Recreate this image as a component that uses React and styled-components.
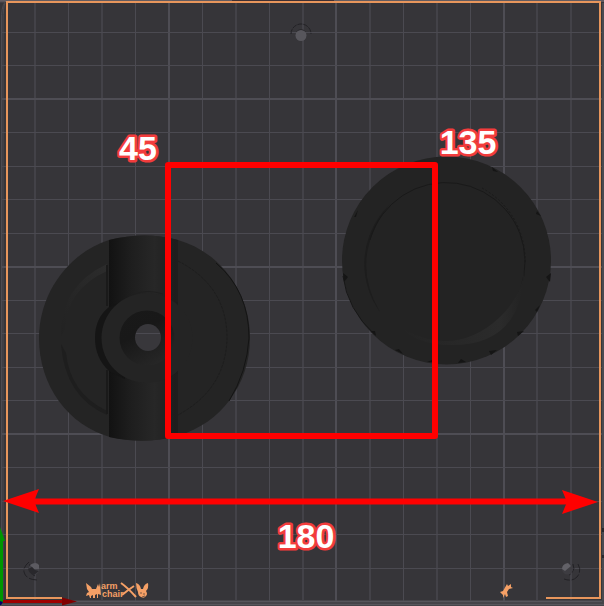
import React from "react";
import styled, { createGlobalStyle } from "styled-components";

const GlobalStyle = createGlobalStyle`
  body {
    margin: 0;
    background: #363539;
  }
`;

const Viewport = styled.main`
  width: 100%;
  overflow: hidden;
`;

const Scene = styled.svg`
  display: block;
  width: 100%;
  height: auto;
`;

const lineColors = { major: "#4e4d54", soft: "#434248", thin: "#4b4a51" };

const GridLine = styled.line`
  stroke: ${(p) => lineColors[p.$weight]};
  stroke-width: ${(p) => (p.$weight === "thin" ? 1 : 2)};
`;

const PlateEdge = styled.path`
  fill: none;
  stroke: #e8965c;
  stroke-width: 2;
`;

const Marker = styled.path`
  fill: none;
  stroke: #ff0000;
  stroke-width: 6;
  stroke-linejoin: round;
`;

const ArrowHead = styled.path`
  fill: #ff0000;
`;

const Dimension = styled.text`
  font-family: "Liberation Sans", Arial, sans-serif;
  font-size: 34px;
  font-weight: 700;
  text-anchor: middle;
  fill: #ffffff;
  stroke: #f23c3c;
  stroke-width: 5px;
  stroke-linejoin: round;
  paint-order: stroke;
`;

const LogoWord = styled.text`
  font-family: "Liberation Sans", Arial, sans-serif;
  font-size: 9px;
  font-weight: 700;
  fill: #f5a066;
  stroke: none;
`;

const columns = [35, 68, 102, 135, 169, 202, 236, 269, 303, 336, 370, 403, 437, 470, 504, 537, 571];
const rows = [32, 65, 99, 132, 166, 199, 233, 267, 300, 333, 367, 400, 434, 467, 501, 534, 568];
const majorColumns = [169, 336, 504];
const softColumns = [35, 102, 236, 303, 370, 437, 537, 571];
const majorRows = [99, 267, 434];

function Grid() {
  return (
    <g>
      {columns.map((x) => {
        const weight = majorColumns.includes(x) ? "major" : softColumns.includes(x) ? "soft" : "thin";
        const at = weight === "thin" ? x + 0.5 : x;
        return <GridLine key={x} $weight={weight} x1={at} x2={at} y1="3" y2="601" />;
      })}
      {rows.map((y) => {
        const weight = majorRows.includes(y) ? "major" : "thin";
        const at = weight === "thin" ? y + 0.5 : y;
        return <GridLine key={y} $weight={weight} x1="2" x2="602" y1={at} y2={at} />;
      })}
    </g>
  );
}

function Screws() {
  return (
    <g>
      <path d="M291 34a10 10 0 0 1 20 0" fill="none" stroke="#222125" strokeDasharray="5 1" />
      <path d="M296 32q5-6 10 0" fill="#28272b" />
      <circle cx="301" cy="35.500" r="5.500" fill="#57565c" />
      <path d="M29 562q-6 5-5 10q2 8 14 8M30 564q-3 8 5 12" fill="none" stroke="#222125" strokeDasharray="8 2" />
      <circle cx="34" cy="569" r="5.500" fill="#414046" />
      <path d="M30 565q6-4 9 0v4h-5z" fill="#5c5b61" />
      <path d="M28 569l4-2 3 3 4 1-5 4q-5-1-6-6" fill="#29282c" />
      <path d="M578 564q4 7-1 13q-5 5-13 2M573 564q3 7-4 11" fill="none" stroke="#222125" strokeDasharray="9 2" />
      <circle cx="567.500" cy="569" r="5.500" fill="#3d3c41" />
      <path d="M562 569q0-5 6-6l3 3-6 5z" fill="#626167" />
    </g>
  );
}

function SlottedKnob() {
  return (
    <g>
      <path
        fill="#242424"
        d="M39 338C39 294 68 253 109 240Q145 231 178 240C220 252 250 292 250 338C250 385 220 423 180 435Q145 445 110 437C68 425 39 386 39 338Z"
      />
      <path d="M109 240Q145 231 178 240V436Q145 445 109 437Z" fill="url(#slot)" />
      <path d="M107 264Q60 286 61 336L65 329Q67 289 107 271Z" fill="url(#ridge)" />
      <path d="M61 344Q65 397 107 415V411Q70 393 66 353Z" fill="#1e1e1e" />
      <path d="M107 265V306M107 370V414" stroke="#1a1a1a" strokeWidth="2" />
      <path d="M109 307Q95 318 95 338T109 371Q118 376 125 379V300Z" fill="#151515" />
      <ellipse cx="147" cy="338" rx="45.500" ry="45" fill="#242424" />
      <path d="M135 294Q147 289 163 294" fill="none" stroke="#1f1f1f" />
      <circle cx="147" cy="338" r="27.500" fill="url(#bore)" />
      <ellipse cx="148" cy="337.500" rx="13" ry="13.500" fill="#38373b" />
      <path d="M136 333.500H160" stroke="#4b4a51" />
      <path d="M178 261Q227 286 227 338Q226 389 178 415" fill="none" stroke="#1d1d1d" strokeDasharray="3 1" />
      <path d="M216 263Q249 291 249 338Q247 372 229 401" fill="none" stroke="#141414" />
      <path d="M177 241V302M177 374V433" stroke="#1e1e1e" strokeWidth="2" />
    </g>
  );
}

function RoundKnob() {
  return (
    <g>
      <ellipse cx="446.500" cy="260.500" rx="104.500" ry="104" fill="#232323" />
      <path d="M382 213A82 82 0 0 0 380 312Q348 258 390 204Z" fill="#1d1d1d" />
      <path d="M370 240A79 79 0 0 1 525 261A79 79 0 0 1 508 311" fill="none" stroke="#191919" />
      <path d="M398 326Q454 360 500 317Q529 289 524 250Q531 348 447 345Q419 345 398 326Z" fill="url(#rim)" />
      <path d="M482 188A82 82 0 0 1 525 263" fill="none" stroke="#1a1a1a" strokeDasharray="2 2" />
      <path
        d="M343 273l5 4-4 5M537 211l4 5-5-2M551 273l-5 4 4 5M540 305l-3 7-2-2M524 331l-7 1 1 4M497 350l-8 1 2 4M466 362l-5-3-3 4M435 362l-8 0 5-2M403 354l-4-5-4 1M376 336l-1-5-4 0M492 167l6 5-5-1M358 210l-2 7-2 0"
        fill="#151515"
      />
      <path d="M343 276Q347 309 375 335" fill="none" stroke="#171717" />
    </g>
  );
}

function PlateLogo() {
  return (
    <g stroke="#f5a066" fill="none">
      <path
        d="M86 583l5 4 1 2h4l2-5 1 3 1-4 1 12-3-1v4h-1v-4l-2 1v3h-2v-3l-2 1v2h-1l-1-3-3 1 1-3 2-1-2-3z"
        fill="#f5a066"
        strokeWidth="0"
      />
      <LogoWord x="101" y="589">arm</LogoWord>
      <LogoWord x="102" y="597">chair</LogoWord>
      <path d="M121 583q7 5 15 14" strokeWidth="2" />
      <path d="M134 586q-6 4-12 9" strokeWidth="2" />
      <path
        d="M136 583q4 1 5 6h2q1-5 5-6q1 5-2 8q2 3 0 5q-2 3-5 1q-3-1-3-5q-2-4-2-9z"
        fill="#f5a066"
        strokeWidth="0"
      />
      <path d="M140 593h2M144 593v2M142 597l3-1" stroke="#7a5844" />
    </g>
  );
}

export default function App() {
  return (
    <Viewport>
      <GlobalStyle />
      <Scene viewBox="0 0 604 606" aria-label="Build plate with measurements">
        <defs>
          <linearGradient id="slot">
            <stop offset="0" stopColor="#121212" />
            <stop offset="0.320" stopColor="#1e1e1e" />
            <stop offset="0.660" stopColor="#272727" />
            <stop offset="1" stopColor="#1c1c1c" />
          </linearGradient>
          <linearGradient id="bore" x1="0" y1="0" x2="0.600" y2="1">
            <stop offset="0" stopColor="#191919" />
            <stop offset="0.450" stopColor="#181818" />
            <stop offset="1" stopColor="#262626" />
          </linearGradient>
          <linearGradient id="ridge" x1="1" y1="0" x2="0" y2="1">
            <stop offset="0" stopColor="#2c2c2c" />
            <stop offset="1" stopColor="#222222" />
          </linearGradient>
          <linearGradient id="rim">
            <stop offset="0" stopColor="#232323" />
            <stop offset="0.800" stopColor="#2b2b2b" />
            <stop offset="1" stopColor="#222222" />
          </linearGradient>
        </defs>
        <rect width="604" height="606" fill="#363539" />
        <path d="M0 0H604V2H0Z" fill="#625b60" />
        <path d="M232 0H334V1H232Z" fill="#3f3033" />
        <path d="M602 3H604V606H602Z" fill="#4b4a4f" />
        <path d="M602 528h2v4h-2zM602 555h2v3h-2z" fill="#28272b" />
        <path d="M0 600H604V606H0Z" fill="#454449" />
        <path d="M0 601.500H602M0 604.500H604" fill="none" stroke="#56555b" />
        <path d="M0 2H5Q1 8 1.500 20V606M5 3Q3 8 3 20V600" fill="none" stroke="#4c4b51" />
        <Grid />
        <Screws />
        <PlateEdge d="M62 598H7V2H600V598H546" />
        <SlottedKnob />
        <RoundKnob />
        <PlateLogo />
        <path
          d="M507 584l1 2 3-2v3l2 1-4 1-2 3 1 4-2 1-1-3-2 4v-3l-3-3 3-1z"
          fill="#f5a066"
        />
        <path d="M0 540V527l5 14H3V602H0Z" fill="#009600" />
        <path d="M3 600H62V603H3Z" fill="#9f0000" />
        <path d="M62 597.500L77 601.500L62 605.500Z" fill="#800000" />
        <path d="M0 601l3 1-2 3H0Z" fill="#000066" />
        <Marker d="M168 165H435V436H168Z" />
        <Marker d="M34 501.500H570" />
        <ArrowHead d="M3 501L39 489L34 501L39 513Z" />
        <ArrowHead d="M598 502L562 490L567 502L562 514Z" />
        <Dimension x="138" y="160">45</Dimension>
        <Dimension x="468" y="154">135</Dimension>
        <Dimension x="306" y="548">180</Dimension>
      </Scene>
    </Viewport>
  );
}
